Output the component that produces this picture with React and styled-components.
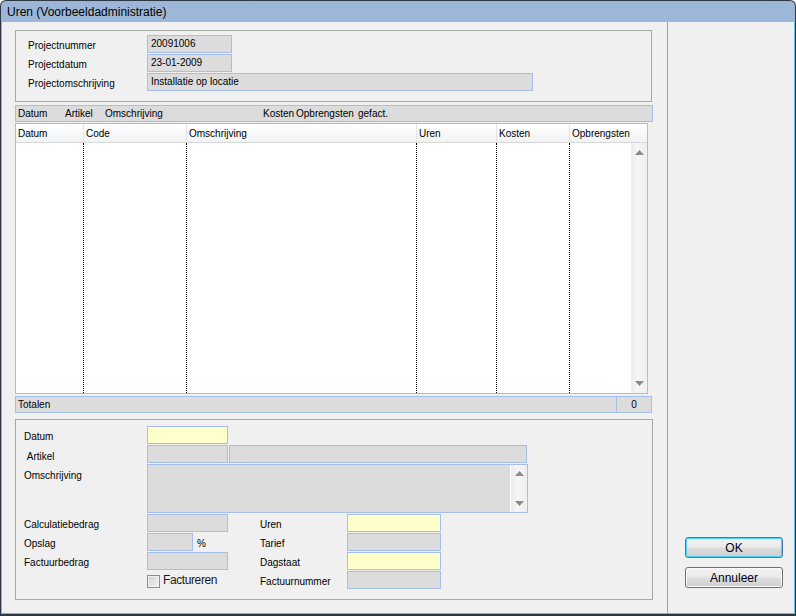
import React from 'react';
import styled, { createGlobalStyle } from 'styled-components';

const GlobalStyle = createGlobalStyle`
  html, body {
    margin: 0;
    padding: 0;
    background: #f0f0f0;
  }
  body {
    font-family: "Liberation Sans", Arial, sans-serif;
    font-size: 10px;
    color: #000;
  }
`;

const Window = styled.div`
  width: 796px;
  height: 616px;
  box-sizing: border-box;
  display: flex;
  flex-direction: column;
  border: 1px solid #2d3844;
  border-bottom-width: 2px;
  border-radius: 6px 6px 0 0;
  overflow: hidden;
  background: linear-gradient(#9cb6d7, #bad2ec);
`;

const TitleBar = styled.div`
  height: 21px;
  flex: none;
  display: flex;
  align-items: center;
  padding-left: 6px;
  font-size: 12px;
  color: #000;
`;

const Body = styled.div`
  flex: 1;
  display: flex;
  background: #f0f0f0;
  border: 1px solid #62bde6;
  border-top: none;
  min-height: 0;
`;

const Main = styled.div`
  width: 666px;
  box-sizing: border-box;
  border-right: 1px solid #a0a0a0;
  padding: 8px 0 0 13px;
  display: flex;
  flex-direction: column;
`;

const Side = styled.div`
  flex: 1;
  display: flex;
  flex-direction: column;
  justify-content: flex-end;
  gap: 9px;
  padding: 0 0 25px 17px;
`;

const GroupBox = styled.div`
  box-sizing: border-box;
  width: ${p => p.$w}px;
  height: ${p => p.$h}px;
  margin-top: ${p => p.$mt || 0}px;
  border: 1px solid #a7a7a7;
  padding: ${p => p.$pad};
`;

const InfoGrid = styled.div`
  display: grid;
  grid-template-columns: 119px auto;
  grid-auto-rows: 18px;
  row-gap: 1px;
  align-items: center;
`;

const Label = styled.div`
  width: ${p => (p.$w ? `${p.$w}px` : 'auto')};
  flex: none;
  padding-top: ${p => p.$pt || 2}px;
  white-space: nowrap;
`;

const Field = styled.div`
  box-sizing: border-box;
  width: ${p => p.$w}px;
  height: ${p => p.$h || 18}px;
  flex: none;
  border: 1px solid #a6bfea;
  background: ${p => (p.$yellow ? '#ffffcc' : '#dcdcdc')};
  padding: 0 3px;
  line-height: 16px;
  white-space: nowrap;
  position: relative;
`;

const HeadBar = styled.div`
  box-sizing: border-box;
  width: 638px;
  height: 17px;
  margin-top: 3px;
  border: 1px solid #a6bfea;
  background: #dcdcdc;
  display: flex;
  align-items: center;
  padding-left: 2px;
`;

const HeadBarCell = styled.span`
  width: ${p => (p.$w ? `${p.$w}px` : 'auto')};
  flex: none;
  white-space: nowrap;
`;

const Table = styled.div`
  box-sizing: border-box;
  width: 633px;
  height: 271px;
  margin-top: 1px;
  border: 1px solid #a6bfea;
  background: #fff;
  display: flex;
  flex-direction: column;
`;

const TableHead = styled.div`
  height: 18px;
  flex: none;
  display: flex;
  background: linear-gradient(#ffffff, #f1f2f4);
  border-bottom: 1px solid #d8d8d8;
`;

const HeadCell = styled.div`
  box-sizing: border-box;
  width: ${p => (p.$w ? `${p.$w}px` : 'auto')};
  flex: ${p => (p.$w ? 'none' : '1')};
  border-left: ${p => (p.$first ? 'none' : '1px solid #e4e4e4')};
  padding: 4px 0 0 2px;
  white-space: nowrap;
`;

const TableBody = styled.div`
  flex: 1;
  display: flex;
`;

const BodyCol = styled.div`
  box-sizing: border-box;
  width: ${p => p.$w}px;
  flex: none;
  border-left: ${p => (p.$first ? 'none' : '1px dotted #000')};
`;

const ScrollBar = styled.div`
  box-sizing: border-box;
  width: ${p => p.$w || 16}px;
  flex: none;
  display: flex;
  flex-direction: column;
  justify-content: space-between;
  align-items: center;
  padding: ${p => p.$pad || '7px 0 7px'};
  background: linear-gradient(90deg, #ebebeb, #f6f6f6 40%, #eeeeee);
  border-left: ${p => (p.$edge ? '1px solid #ffffff' : 'none')};
`;

const TotalBar = styled.div`
  box-sizing: border-box;
  width: 637px;
  height: 17px;
  margin-top: 2px;
  border: 1px solid #a6bfea;
  background: #dcdcdc;
  display: flex;
  align-items: center;
`;

const TotalLabel = styled.div`
  flex: 1;
  padding-left: 2px;
`;

const TotalValue = styled.div`
  width: 34px;
  height: 100%;
  border-left: 1px solid #a6bfea;
  display: flex;
  align-items: center;
  justify-content: center;
`;

const FormRow = styled.div`
  display: flex;
  align-items: ${p => (p.$top ? 'flex-start' : 'center')};
  gap: ${p => p.$gap || 0}px;
  margin-top: ${p => (p.$first ? 0 : 1)}px;
  min-height: 18px;
`;

const Columns = styled.div`
  display: flex;
  margin-top: 1px;
`;

const Column = styled.div`
  width: ${p => (p.$w ? `${p.$w}px` : 'auto')};
  display: flex;
  flex-direction: column;
`;

const Percent = styled.span`
  margin-left: 4px;
  padding-top: 2px;
`;

const CheckRow = styled.label`
  display: flex;
  align-items: center;
  height: 18px;
  margin: 1px 0 0 123px;
  font-size: 12px;
  letter-spacing: -0.4px;
  color: #1a1a1a;
  gap: 3px;
`;

const CheckBox = styled.span`
  box-sizing: border-box;
  width: 13px;
  height: 13px;
  margin-top: 2px;
  border: 1px solid #8e8f8f;
  background: linear-gradient(135deg, #cfcfcf, #f7f7f7);
  box-shadow: inset 0 0 0 1px #f2f2f2;
`;

const FieldScroll = styled.div`
  position: absolute;
  top: 0;
  right: 0;
  bottom: 0;
  display: flex;
`;

const Button = styled.button`
  box-sizing: border-box;
  width: 98px;
  height: 21px;
  border-radius: 3px;
  border: 1px solid ${p => (p.$primary ? '#3c7fb1' : '#707070')};
  box-shadow: ${p => (p.$primary ? 'inset 0 0 0 1px #48d3fb' : 'inset 0 0 0 1px #fbfbfb')};
  background: linear-gradient(#f2f2f2 0%, #ebebeb 48%, #dddddd 52%, #cfcfcf 100%);
  font-family: "Liberation Sans", Arial, sans-serif;
  font-size: 12px;
  color: #00001a;
  padding: 0;
`;

const Arrow = ({ up }) => (
  <svg width="9" height="5" viewBox="0 0 9 5">
    {up ? (
      <polygon points="4.5,0 9,5 0,5" fill="#8a8a8a" />
    ) : (
      <polygon points="0,0 9,0 4.5,5" fill="#8a8a8a" />
    )}
  </svg>
);

const columns = [
  { title: 'Datum', w: 67 },
  { title: 'Code', w: 103 },
  { title: 'Omschrijving', w: 230 },
  { title: 'Uren', w: 80 },
  { title: 'Kosten', w: 73 },
  { title: 'Opbrengsten', w: 62 },
];

const headBar = [
  { text: 'Datum', w: 47 },
  { text: 'Artikel', w: 40 },
  { text: 'Omschrijving', w: 158 },
  { text: 'Kosten', w: 33 },
  { text: 'Opbrengsten', w: 62 },
  { text: 'gefact.' },
];

export default function App() {
  return (
    <>
      <GlobalStyle />
      <Window>
        <TitleBar>Uren (Voorbeeldadministratie)</TitleBar>
        <Body>
          <Main>
            <GroupBox $w={637} $h={72} $pad="4px 0 0 12px">
              <InfoGrid>
                <Label>Projectnummer</Label>
                <Field $w={85}>20091006</Field>
                <Label>Projectdatum</Label>
                <Field $w={85}>23-01-2009</Field>
                <Label>Projectomschrijving</Label>
                <Field $w={386}>Installatie op locatie</Field>
              </InfoGrid>
            </GroupBox>

            <HeadBar>
              {headBar.map(c => (
                <HeadBarCell key={c.text} $w={c.w}>{c.text}</HeadBarCell>
              ))}
            </HeadBar>

            <Table>
              <TableHead>
                {columns.map((c, i) => (
                  <HeadCell key={c.title} $first={i === 0} $w={i === columns.length - 1 ? 0 : c.w}>
                    {c.title}
                  </HeadCell>
                ))}
              </TableHead>
              <TableBody>
                {columns.map((c, i) => (
                  <BodyCol key={c.title} $first={i === 0} $w={c.w} />
                ))}
                <ScrollBar>
                  <Arrow up />
                  <Arrow />
                </ScrollBar>
              </TableBody>
            </Table>

            <TotalBar>
              <TotalLabel>Totalen</TotalLabel>
              <TotalValue>0</TotalValue>
            </TotalBar>

            <GroupBox $w={638} $h={181} $mt={6} $pad="6px 0 0 8px">
              <FormRow $first>
                <Label $w={123}>Datum</Label>
                <Field $w={81} $yellow />
              </FormRow>
              <FormRow $gap={1}>
                <Label $w={122} $pt={4}>&nbsp;Artikel</Label>
                <Field $w={81} />
                <Field $w={298} />
              </FormRow>
              <FormRow $top>
                <Label $w={123} $pt={6}>Omschrijving</Label>
                <Field $w={381} $h={49}>
                  <FieldScroll>
                    <ScrollBar $w={17} $edge $pad="6px 0 6px">
                      <Arrow up />
                      <Arrow />
                    </ScrollBar>
                  </FieldScroll>
                </Field>
              </FormRow>

              <Columns>
                <Column $w={236}>
                  <FormRow $first>
                    <Label $w={123}>Calculatiebedrag</Label>
                    <Field $w={81} />
                  </FormRow>
                  <FormRow>
                    <Label $w={123}>Opslag</Label>
                    <Field $w={46} />
                    <Percent>%</Percent>
                  </FormRow>
                  <FormRow>
                    <Label $w={123}>Factuurbedrag</Label>
                    <Field $w={81} />
                  </FormRow>
                  <CheckRow>
                    <CheckBox />
                    Factureren
                  </CheckRow>
                </Column>
                <Column>
                  <FormRow $first>
                    <Label $w={87}>Uren</Label>
                    <Field $w={94} $yellow />
                  </FormRow>
                  <FormRow>
                    <Label $w={87}>Tarief</Label>
                    <Field $w={94} />
                  </FormRow>
                  <FormRow>
                    <Label $w={87}>Dagstaat</Label>
                    <Field $w={94} $yellow />
                  </FormRow>
                  <FormRow>
                    <Label $w={87}>Factuurnummer</Label>
                    <Field $w={94} />
                  </FormRow>
                </Column>
              </Columns>
            </GroupBox>
          </Main>
          <Side>
            <Button $primary>OK</Button>
            <Button>Annuleer</Button>
          </Side>
        </Body>
      </Window>
    </>
  );
}
